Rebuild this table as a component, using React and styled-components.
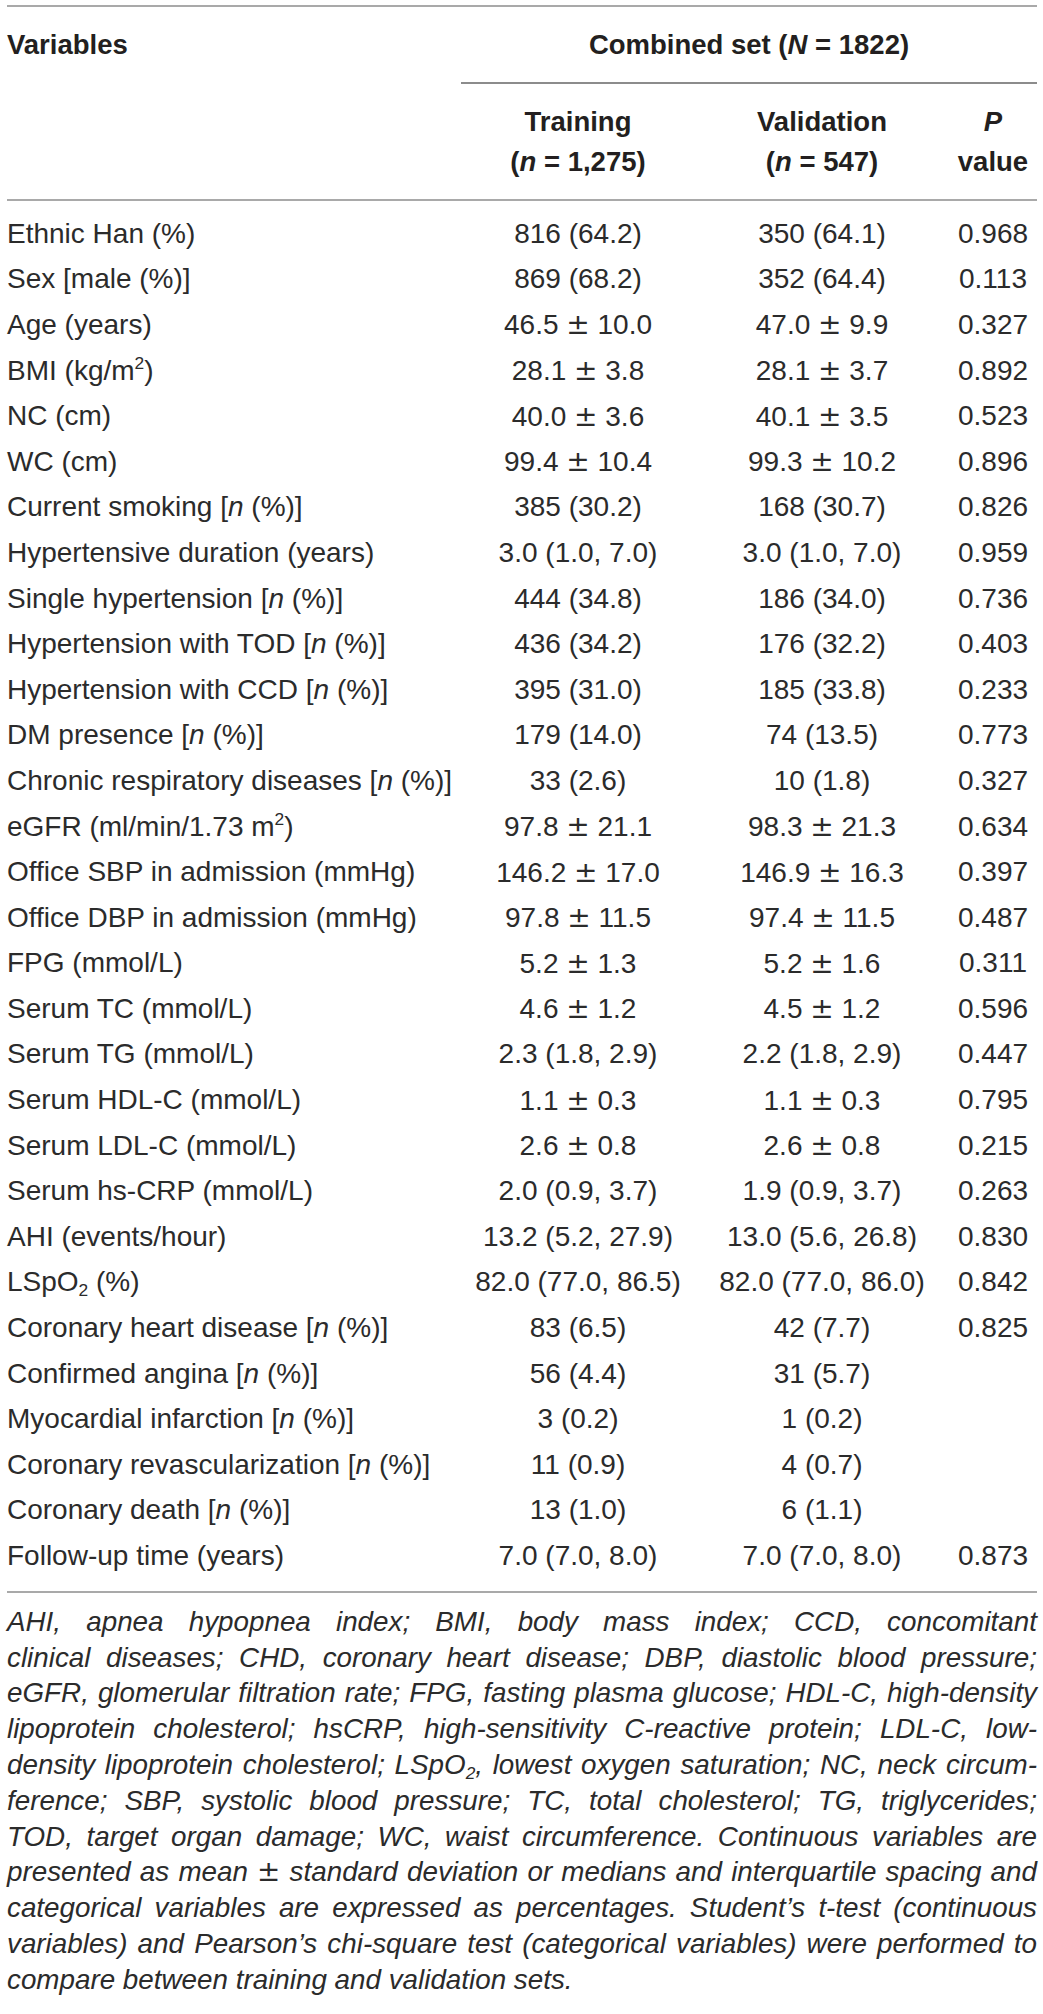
import React from "react";
import styled, { createGlobalStyle } from "styled-components";

const GlobalStyle = createGlobalStyle`
  html, body {
    margin: 0;
    padding: 0;
    background: #ffffff;
  }
  body {
    font-family: "Liberation Sans", Arial, Helvetica, sans-serif;
    color: #2b2b2b;
    -webkit-font-smoothing: antialiased;
  }
`;

const COLS = "454px 234px 254px 88px";

const Page = styled.div`
  width: 1030px;
  padding: 5px 6px 0 7px;
`;

const Table = styled.div`
  border-top: 2px solid #a9a9a9;
`;

const Head = styled.div`
  display: grid;
  grid-template-columns: ${COLS};
  grid-template-rows: 77px 115px;
  border-bottom: 2px solid #a9a9a9;
  font-weight: 700;
  font-size: 27.5px;
  color: #231f20;
`;

const VarHead = styled.div`
  grid-column: 1;
  grid-row: 1;
  display: flex;
  align-items: center;
  padding-bottom: 2px;
`;

const GroupHead = styled.div`
  grid-column: 2 / 5;
  grid-row: 1;
  display: flex;
  align-items: center;
  justify-content: center;
  border-bottom: 2px solid #8c8c8c;
`;

const ColHead = styled.div`
  grid-row: 2;
  grid-column: ${(p) => p.$col};
  display: flex;
  flex-direction: column;
  align-items: center;
  justify-content: center;
  line-height: 40px;
  text-align: center;
`;

const Body = styled.div`
  padding: 10px 0 12px;
  border-bottom: 2px solid #a9a9a9;
`;

const Row = styled.div`
  display: grid;
  grid-template-columns: ${COLS};
  height: 45.6px;
  align-items: center;
  font-size: 28px;
  white-space: nowrap;
`;

const Label = styled.div`
  text-align: left;
`;

const Cell = styled.div`
  text-align: center;
`;

const Em = styled.i`
  font-style: italic;
`;

const Pm = styled.span`
  font-family: "DejaVu Sans", "Liberation Sans", sans-serif;
  font-weight: 400;
`;

const Sup = styled.sup`
  font-size: 0.62em;
  line-height: 0;
  vertical-align: 0.62em;
`;

const Sub = styled.sub`
  font-size: 0.62em;
  line-height: 0;
  vertical-align: -0.28em;
`;

const Notes = styled.div`
  padding-top: 11px;
  font-style: italic;
  font-size: 27.8px;
  line-height: 35.8px;
`;

const NoteLine = styled.div`
  text-align: justify;
  text-align-last: ${(p) => (p.$last ? "left" : "justify")};
`;

const n = <Em>n</Em>;
const pm = (a, b) => (
  <>
    {a} <Pm>{"\u00b1"}</Pm> {b}
  </>
);

const rows = [
  ["Ethnic Han (%)", "816 (64.2)", "350 (64.1)", "0.968"],
  ["Sex [male (%)]", "869 (68.2)", "352 (64.4)", "0.113"],
  ["Age (years)", pm("46.5", "10.0"), pm("47.0", "9.9"), "0.327"],
  [<>BMI (kg/m<Sup>2</Sup>)</>, pm("28.1", "3.8"), pm("28.1", "3.7"), "0.892"],
  ["NC (cm)", pm("40.0", "3.6"), pm("40.1", "3.5"), "0.523"],
  ["WC (cm)", pm("99.4", "10.4"), pm("99.3", "10.2"), "0.896"],
  [<>Current smoking [{n} (%)]</>, "385 (30.2)", "168 (30.7)", "0.826"],
  ["Hypertensive duration (years)", "3.0 (1.0, 7.0)", "3.0 (1.0, 7.0)", "0.959"],
  [<>Single hypertension [{n} (%)]</>, "444 (34.8)", "186 (34.0)", "0.736"],
  [<>Hypertension with TOD [{n} (%)]</>, "436 (34.2)", "176 (32.2)", "0.403"],
  [<>Hypertension with CCD [{n} (%)]</>, "395 (31.0)", "185 (33.8)", "0.233"],
  [<>DM presence [{n} (%)]</>, "179 (14.0)", "74 (13.5)", "0.773"],
  [<>Chronic respiratory diseases [{n} (%)]</>, "33 (2.6)", "10 (1.8)", "0.327"],
  [<>eGFR (ml/min/1.73 m<Sup>2</Sup>)</>, pm("97.8", "21.1"), pm("98.3", "21.3"), "0.634"],
  ["Office SBP in admission (mmHg)", pm("146.2", "17.0"), pm("146.9", "16.3"), "0.397"],
  ["Office DBP in admission (mmHg)", pm("97.8", "11.5"), pm("97.4", "11.5"), "0.487"],
  ["FPG (mmol/L)", pm("5.2", "1.3"), pm("5.2", "1.6"), "0.311"],
  ["Serum TC (mmol/L)", pm("4.6", "1.2"), pm("4.5", "1.2"), "0.596"],
  ["Serum TG (mmol/L)", "2.3 (1.8, 2.9)", "2.2 (1.8, 2.9)", "0.447"],
  ["Serum HDL-C (mmol/L)", pm("1.1", "0.3"), pm("1.1", "0.3"), "0.795"],
  ["Serum LDL-C (mmol/L)", pm("2.6", "0.8"), pm("2.6", "0.8"), "0.215"],
  ["Serum hs-CRP (mmol/L)", "2.0 (0.9, 3.7)", "1.9 (0.9, 3.7)", "0.263"],
  ["AHI (events/hour)", "13.2 (5.2, 27.9)", "13.0 (5.6, 26.8)", "0.830"],
  [<>LSpO<Sub>2</Sub> (%)</>, "82.0 (77.0, 86.5)", "82.0 (77.0, 86.0)", "0.842"],
  [<>Coronary heart disease [{n} (%)]</>, "83 (6.5)", "42 (7.7)", "0.825"],
  [<>Confirmed angina [{n} (%)]</>, "56 (4.4)", "31 (5.7)", ""],
  [<>Myocardial infarction [{n} (%)]</>, "3 (0.2)", "1 (0.2)", ""],
  [<>Coronary revascularization [{n} (%)]</>, "11 (0.9)", "4 (0.7)", ""],
  [<>Coronary death [{n} (%)]</>, "13 (1.0)", "6 (1.1)", ""],
  ["Follow-up time (years)", "7.0 (7.0, 8.0)", "7.0 (7.0, 8.0)", "0.873"],
];

const notes = [
  "AHI, apnea hypopnea index; BMI, body mass index; CCD, concomitant",
  "clinical diseases; CHD, coronary heart disease; DBP, diastolic blood pressure;",
  "eGFR, glomerular filtration rate; FPG, fasting plasma glucose; HDL-C, high-density",
  "lipoprotein cholesterol; hsCRP, high-sensitivity C-reactive protein; LDL-C, low-",
  <>density lipoprotein cholesterol; LSpO<Sub>2</Sub>, lowest oxygen saturation; NC, neck circum-</>,
  "ference; SBP, systolic blood pressure; TC, total cholesterol; TG, triglycerides;",
  "TOD, target organ damage; WC, waist circumference. Continuous variables are",
  <>presented as mean <Pm>{"\u00b1"}</Pm> standard deviation or medians and interquartile spacing and</>,
  "categorical variables are expressed as percentages. Student\u2019s t-test (continuous",
  "variables) and Pearson\u2019s chi-square test (categorical variables) were performed to",
  "compare between training and validation sets.",
];

export default function App() {
  return (
    <>
      <GlobalStyle />
      <Page>
        <Table>
          <Head>
            <VarHead>Variables</VarHead>
            <GroupHead>
              <span>
                Combined set (<Em>N</Em> = 1822)
              </span>
            </GroupHead>
            <ColHead $col={2}>
              <span>Training</span>
              <span>({n} = 1,275)</span>
            </ColHead>
            <ColHead $col={3}>
              <span>Validation</span>
              <span>({n} = 547)</span>
            </ColHead>
            <ColHead $col={4}>
              <Em>P</Em>
              <span>value</span>
            </ColHead>
          </Head>
          <Body>
            {rows.map((r, i) => (
              <Row key={i}>
                <Label>{r[0]}</Label>
                <Cell>{r[1]}</Cell>
                <Cell>{r[2]}</Cell>
                <Cell>{r[3]}</Cell>
              </Row>
            ))}
          </Body>
        </Table>
        <Notes>
          {notes.map((t, i) => (
            <NoteLine key={i} $last={i === notes.length - 1}>
              {t}
            </NoteLine>
          ))}
        </Notes>
      </Page>
    </>
  );
}
